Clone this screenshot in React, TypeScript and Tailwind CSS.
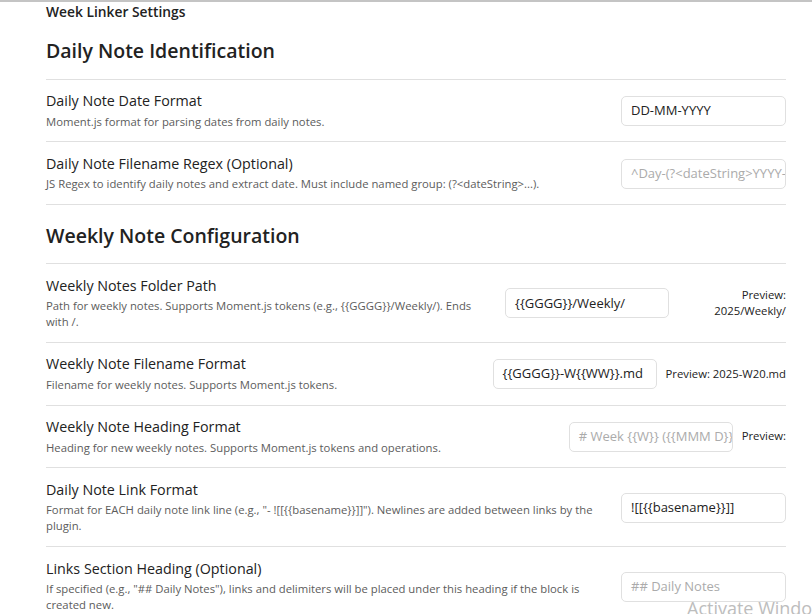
import React from "react";

const font = { fontFamily: '"Open Sans", "Noto Sans", sans-serif' };

function Input({ value, placeholder, w = "w-[165px]" }: { value?: string; placeholder?: string; w?: string }) {
  return (
    <div
      className={`${w} h-[30px] shrink-0 rounded-[5px] border border-[#e0e0e0] bg-white px-[9px] flex items-center overflow-hidden whitespace-nowrap text-[13px]`}
    >
      {value ? (
        <span className="text-[#222222]">{value}</span>
      ) : (
        <span className="text-[#ababab]">{placeholder}</span>
      )}
    </div>
  );
}

function Row({
  title,
  desc,
  children,
}: {
  title: string;
  desc: React.ReactNode;
  children: React.ReactNode;
}) {
  return (
    <div className="flex items-center border-t border-[#e0e0e0] pt-[12.5px] pb-[11.8px]">
      <div className="flex-1 min-w-0 pr-[20px]">
        <div className="text-[14.3px] leading-[18px] text-[#222222]">{title}</div>
        <div className="pt-[3.5px] text-[11.3px] leading-[16px] text-[#5c5c5c]">{desc}</div>
      </div>
      {children}
    </div>
  );
}

export default function App() {
  return (
    <div className="relative w-[812px] h-[614px] overflow-hidden bg-white border-t-2 border-[#c4c4c4]" style={font}>
      <div className="pl-[46px] pr-[26px]">
        <div className="text-[13.8px] leading-[19.5px] font-semibold text-[#222222]">Week Linker Settings</div>
        <div className="pt-[14px] pb-[14px] text-[19.5px] leading-[29px] font-semibold text-[#222222]">
          Daily Note Identification
        </div>
        <Row title="Daily Note Date Format" desc="Moment.js format for parsing dates from daily notes.">
          <Input value="DD-MM-YYYY" />
        </Row>
        <Row
          title="Daily Note Filename Regex (Optional)"
          desc="JS Regex to identify daily notes and extract date. Must include named group: (?<dateString>...)."
        >
          <Input placeholder="^Day-(?<dateString>YYYY-MM-DD)" />
        </Row>
        <div className="border-t border-[#e0e0e0] pt-[16px] pb-[13px] text-[19.5px] leading-[29px] font-semibold text-[#222222]">
          Weekly Note Configuration
        </div>
        <Row
          title="Weekly Notes Folder Path"
          desc="Path for weekly notes. Supports Moment.js tokens (e.g., {{GGGG}}/Weekly/). Ends with /."
        >
          <div className="flex w-[281px] shrink-0 items-center">
            <Input value="{{GGGG}}/Weekly/" w="w-[164px]" />
            <div className="ml-[10px] flex-1 text-right text-[11.3px] leading-[16px] text-[#222222]">
              Preview:
              <br />
              2025/Weekly/
            </div>
          </div>
        </Row>
        <Row title="Weekly Note Filename Format" desc="Filename for weekly notes. Supports Moment.js tokens.">
          <div className="flex items-center shrink-0">
            <Input value="{{GGGG}}-W{{WW}}.md" w="w-[164px]" />
            <div className="ml-[9px] text-[11.3px] text-[#222222] whitespace-nowrap">Preview: 2025-W20.md</div>
          </div>
        </Row>
        <Row
          title="Weekly Note Heading Format"
          desc="Heading for new weekly notes. Supports Moment.js tokens and operations."
        >
          <div className="flex items-center shrink-0">
            <Input placeholder="# Week {{W}} ({{MMM D}} - {{MMM D}})" w="w-[164px]" />
            <div className="ml-[9px] text-[11.3px] text-[#222222] whitespace-nowrap">Preview:</div>
          </div>
        </Row>
        <Row
          title="Daily Note Link Format"
          desc={'Format for EACH daily note link line (e.g., "- ![[{{basename}}]]"). Newlines are added between links by the plugin.'}
        >
          <Input value="![[{{basename}}]]" />
        </Row>
        <Row
          title="Links Section Heading (Optional)"
          desc={'If specified (e.g., "## Daily Notes"), links and delimiters will be placed under this heading if the block is created new.'}
        >
          <Input placeholder="## Daily Notes" />
        </Row>
      </div>
      <div className="absolute left-[687px] top-[594px] whitespace-nowrap text-[18px] leading-[24px] text-[#bdbdbd]">
        Activate Windows
      </div>
    </div>
  );
}
